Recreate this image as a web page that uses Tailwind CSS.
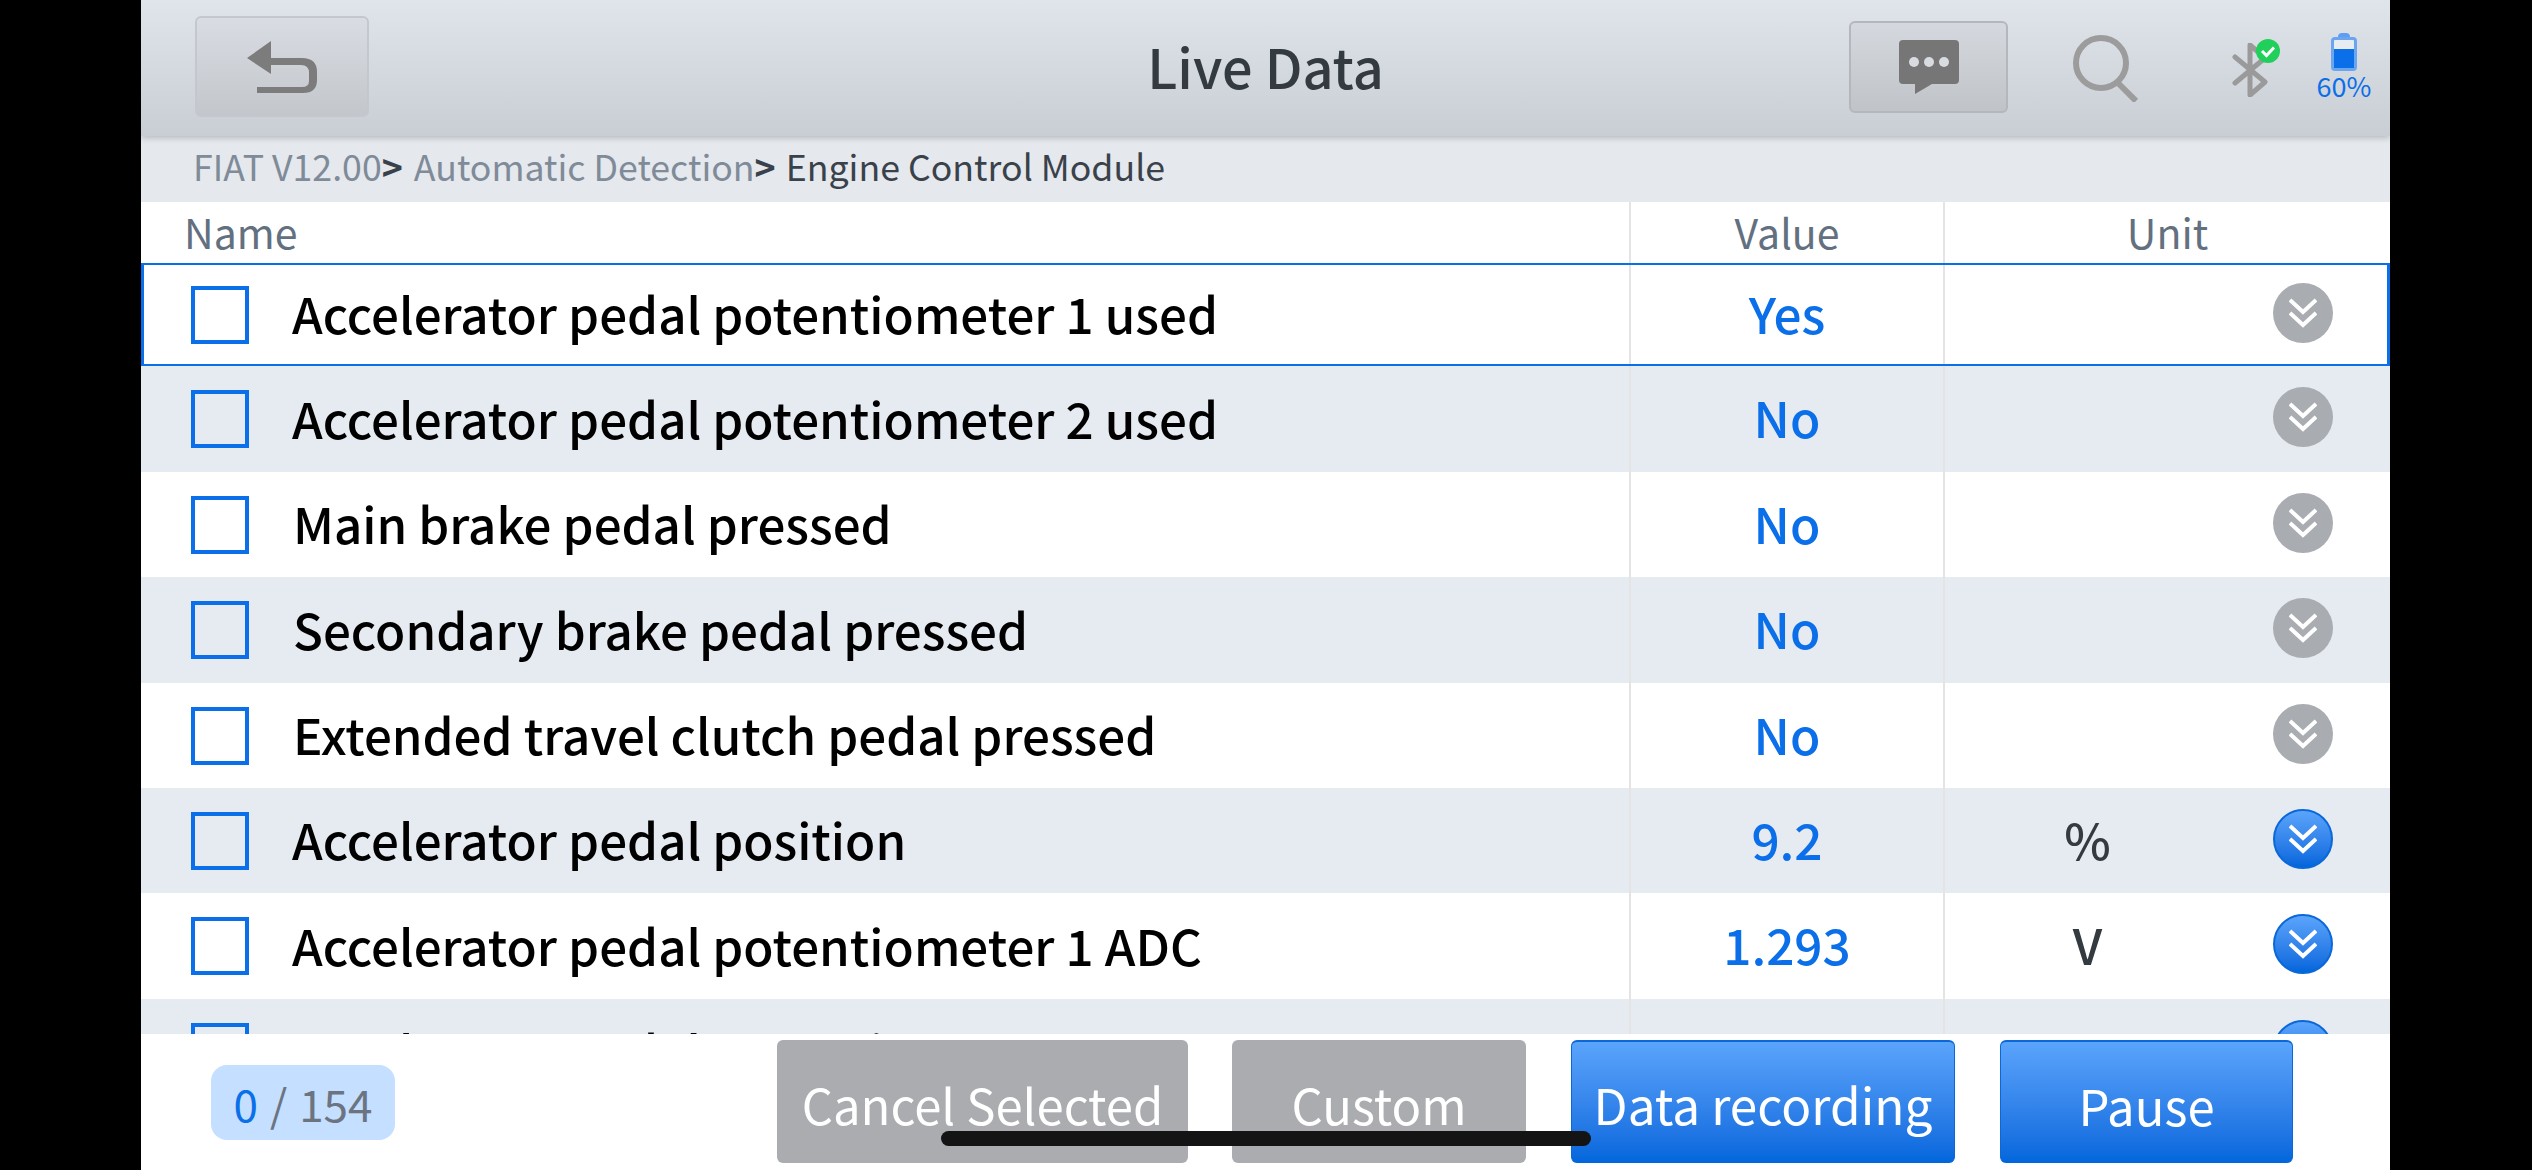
<!doctype html>
<html lang="en">
    <head>
        <meta charset="UTF-8" />
        <title>Live Data</title>
        <script src="https://cdn.jsdelivr.net/npm/@tailwindcss/browser@4"></script>
    </head>
    <body class="bg-black">
        <div class="relative ml-[141px] flex h-[1170px] w-[2249px] flex-col overflow-hidden bg-white font-['Noto_Sans_CJK_SC',sans-serif]">
            <!-- top bar -->
            <div class="relative z-10 flex h-[136px] shrink-0 items-start bg-gradient-to-b from-[#e0e5ec] to-[#c9cdd4] pr-[19px] shadow-[0_2px_6px_rgba(0,0,0,0.2)]">
                <button class="mt-4 ml-[54px] flex h-[101px] w-[174px] items-center justify-center rounded-md border-2 border-[#c4c8ce] bg-gradient-to-b from-[#d9dde3] to-[#c3c7cc]">
                    <svg width="74" height="56" viewBox="0 0 74 56">
                        <path d="M26 2 L2 19 L26 35 V26 H56 Q64 26 64 34 V42 Q64 48 57 48 H12 V54 H58 Q72 54 72 41 V33 Q72 19 57 19 H26 Z" fill="#7c7c7c" />
                    </svg>
                </button>
                <div class="flex-1 pt-[34px] pl-[313px] text-center text-[54px] leading-[64px] font-medium text-[#333a40]">Live Data</div>
                <button class="mt-[21px] flex h-[92px] w-[159px] items-center justify-center rounded-md border-2 border-[#b4b7bc] bg-gradient-to-b from-[#d5d9df] to-[#c0c4c8]">
                    <svg width="62" height="54" viewBox="0 0 62 54">
                        <path d="M5 0 H57 Q61 0 61 4 V40 Q61 44 57 44 H34 L17 54 V44 H5 Q1 44 1 40 V4 Q1 0 5 0 Z" fill="#767676" />
                        <circle cx="16" cy="22" r="5" fill="#d8dce1" />
                        <circle cx="31" cy="22" r="5" fill="#d8dce1" />
                        <circle cx="46" cy="22" r="5" fill="#d8dce1" />
                    </svg>
                </button>
                <svg class="mt-[34px] ml-[64px]" width="66" height="68" viewBox="0 0 66 68">
                    <circle cx="29" cy="29" r="25" fill="none" stroke="#9c9c9c" stroke-width="6" />
                    <path d="M46 49 L64 67" stroke="#9c9c9c" stroke-width="6" />
                </svg>
                <div class="relative mt-[43px] ml-[94px] h-[54px] w-[48px]">
                    <svg width="36" height="54" viewBox="0 0 36 54">
                        <path d="M3 14 L33 39 L18 52 V2 L33 15 L3 40" fill="none" stroke="#9a9a9a" stroke-width="5" stroke-linejoin="round" stroke-linecap="round" />
                    </svg>
                    <svg class="absolute top-[-4px] left-[24px]" width="24" height="24" viewBox="0 0 24 24">
                        <circle cx="12" cy="12" r="12" fill="#21d05a" />
                        <path d="M6 12 L10.5 16.5 L18 8.5" fill="none" stroke="#fff" stroke-width="3" />
                    </svg>
                </div>
                <div class="ml-[37px] flex w-[54px] flex-col items-center pt-[33px]">
                    <div class="h-[4px] w-[12px] rounded-t-sm bg-[#5f9df0]"></div>
                    <div class="flex h-[34px] w-[26px] flex-col justify-end rounded-[4px] border-[3px] border-[#6aa5f0] bg-[#e8ebf0]">
                        <div class="h-[19px] bg-[#0a6fe8]"></div>
                    </div>
                    <div class="text-[27px] leading-[30px] text-[#0a6fe8]">60%</div>
                </div>
            </div>

            <!-- breadcrumb -->
            <div class="flex h-[66px] shrink-0 items-center bg-[#e5e8ec] pb-[6px] pl-[52px] text-[35.7px] leading-[44px] text-[#7f8b99]">
                <span>FIAT V12.00</span><span class="font-bold text-[#39424b]">&gt;</span><span class="ml-[11px]">Automatic Detection</span><span class="font-bold text-[#39424b]">&gt;</span><span class="ml-[10px] text-[#39424b]">Engine Control Module</span>
            </div>

            <!-- table head -->
            <div class="grid h-[61px] shrink-0 grid-cols-[1488px_314px_447px] items-stretch text-[41px] leading-[58px] text-[#627080]">
                <div class="pl-[43px]">Name</div>
                <div class="border-l-2 border-[#e4e4e4] text-center">Value</div>
                <div class="border-l-2 border-[#e4e4e4] text-center">Unit</div>
            </div>

            <!-- rows -->
            <div class="min-h-0 flex-1 overflow-hidden">
                <div class="grid h-[103px] grid-cols-[1485px_314px_287px_157px] items-stretch border-x-[3px] border-y-2 border-[#0a6fe8]">
                    <div class="flex items-center pl-[47px]"><span class="h-[58px] w-[58px] shrink-0 border-[4px] border-[#0a6fe8]"></span><span class="mb-[3px] ml-[43px] text-[49.3px] font-medium text-black">Accelerator pedal potentiometer 1 used</span></div>
                    <div class="flex items-center justify-center border-l-2 border-[#e4e4e4] pb-[3px] text-[49.5px] font-medium text-[#0a6fe8]">Yes</div>
                    <div class="border-l-2 border-[#e4e4e4]"></div>
                    <div class="flex items-center justify-center pr-[11px] pb-1"><span class="flex h-[60px] w-[60px] items-center justify-center rounded-full bg-[#a9acb0]"><svg width="28" height="30" viewBox="0 0 28 30"><path d="M1 2 L14 14 L27 2 M1 15 L14 27 L27 15" fill="none" stroke="#fff" stroke-width="4" /></svg></span></div>
                </div>
                <div class="grid h-[106px] grid-cols-[1488px_314px_287px_160px] items-stretch bg-[#e6eaf1]">
                    <div class="flex items-center pl-[50px]"><span class="h-[58px] w-[58px] shrink-0 border-[4px] border-[#0a6fe8]"></span><span class="mb-[3px] ml-[43px] text-[49.3px] font-medium text-black">Accelerator pedal potentiometer 2 used</span></div>
                    <div class="flex items-center justify-center border-l-2 border-[#e4e4e4] pb-[3px] text-[49.5px] font-medium text-[#0a6fe8]">No</div>
                    <div class="border-l-2 border-[#e4e4e4]"></div>
                    <div class="flex items-center justify-center pr-[14px] pb-1"><span class="flex h-[60px] w-[60px] items-center justify-center rounded-full bg-[#a9acb0]"><svg width="28" height="30" viewBox="0 0 28 30"><path d="M1 2 L14 14 L27 2 M1 15 L14 27 L27 15" fill="none" stroke="#fff" stroke-width="4" /></svg></span></div>
                </div>
                <div class="grid h-[105px] grid-cols-[1488px_314px_287px_160px] items-stretch">
                    <div class="flex items-center pl-[50px]"><span class="h-[58px] w-[58px] shrink-0 border-[4px] border-[#0a6fe8]"></span><span class="mb-[3px] ml-[44px] text-[49.3px] font-medium text-black">Main brake pedal pressed</span></div>
                    <div class="flex items-center justify-center border-l-2 border-[#e4e4e4] pb-[3px] text-[49.5px] font-medium text-[#0a6fe8]">No</div>
                    <div class="border-l-2 border-[#e4e4e4]"></div>
                    <div class="flex items-center justify-center pr-[14px] pb-1"><span class="flex h-[60px] w-[60px] items-center justify-center rounded-full bg-[#a9acb0]"><svg width="28" height="30" viewBox="0 0 28 30"><path d="M1 2 L14 14 L27 2 M1 15 L14 27 L27 15" fill="none" stroke="#fff" stroke-width="4" /></svg></span></div>
                </div>
                <div class="grid h-[106px] grid-cols-[1488px_314px_287px_160px] items-stretch bg-[#e6eaf1]">
                    <div class="flex items-center pl-[50px]"><span class="h-[58px] w-[58px] shrink-0 border-[4px] border-[#0a6fe8]"></span><span class="mb-[3px] ml-[44px] text-[49.3px] font-medium text-black">Secondary brake pedal pressed</span></div>
                    <div class="flex items-center justify-center border-l-2 border-[#e4e4e4] pb-[3px] text-[49.5px] font-medium text-[#0a6fe8]">No</div>
                    <div class="border-l-2 border-[#e4e4e4]"></div>
                    <div class="flex items-center justify-center pr-[14px] pb-1"><span class="flex h-[60px] w-[60px] items-center justify-center rounded-full bg-[#a9acb0]"><svg width="28" height="30" viewBox="0 0 28 30"><path d="M1 2 L14 14 L27 2 M1 15 L14 27 L27 15" fill="none" stroke="#fff" stroke-width="4" /></svg></span></div>
                </div>
                <div class="grid h-[105px] grid-cols-[1488px_314px_287px_160px] items-stretch">
                    <div class="flex items-center pl-[50px]"><span class="h-[58px] w-[58px] shrink-0 border-[4px] border-[#0a6fe8]"></span><span class="mb-[3px] ml-[44px] text-[49.3px] font-medium text-black">Extended travel clutch pedal pressed</span></div>
                    <div class="flex items-center justify-center border-l-2 border-[#e4e4e4] pb-[3px] text-[49.5px] font-medium text-[#0a6fe8]">No</div>
                    <div class="border-l-2 border-[#e4e4e4]"></div>
                    <div class="flex items-center justify-center pr-[14px] pb-1"><span class="flex h-[60px] w-[60px] items-center justify-center rounded-full bg-[#a9acb0]"><svg width="28" height="30" viewBox="0 0 28 30"><path d="M1 2 L14 14 L27 2 M1 15 L14 27 L27 15" fill="none" stroke="#fff" stroke-width="4" /></svg></span></div>
                </div>
                <div class="grid h-[105px] grid-cols-[1488px_314px_287px_160px] items-stretch bg-[#e6eaf1]">
                    <div class="flex items-center pl-[50px]"><span class="h-[58px] w-[58px] shrink-0 border-[4px] border-[#0a6fe8]"></span><span class="mb-[3px] ml-[43px] text-[49.3px] font-medium text-black">Accelerator pedal position</span></div>
                    <div class="flex items-center justify-center border-l-2 border-[#e4e4e4] pb-[3px] text-[49.5px] font-medium text-[#0a6fe8]">9.2</div>
                    <div class="flex items-center justify-center border-l-2 border-[#e4e4e4] pb-[3px] text-[49.5px] font-medium text-[#333a40]">%</div>
                    <div class="flex items-center justify-center pr-[14px] pb-1"><span class="flex h-[60px] w-[60px] items-center justify-center rounded-full border-2 border-[#0a68d8] bg-gradient-to-b from-[#5aa4fb] to-[#0066dc]"><svg width="28" height="30" viewBox="0 0 28 30"><path d="M1 2 L14 14 L27 2 M1 15 L14 27 L27 15" fill="none" stroke="#fff" stroke-width="4" /></svg></span></div>
                </div>
                <div class="grid h-[106px] grid-cols-[1488px_314px_287px_160px] items-stretch">
                    <div class="flex items-center pl-[50px]"><span class="h-[58px] w-[58px] shrink-0 border-[4px] border-[#0a6fe8]"></span><span class="mb-[3px] ml-[43px] text-[49.3px] font-medium text-black">Accelerator pedal potentiometer 1 ADC</span></div>
                    <div class="flex items-center justify-center border-l-2 border-[#e4e4e4] pb-[3px] text-[49.5px] font-medium text-[#0a6fe8]">1.293</div>
                    <div class="flex items-center justify-center border-l-2 border-[#e4e4e4] pb-[3px] text-[49.5px] font-medium text-[#333a40]">V</div>
                    <div class="flex items-center justify-center pr-[14px] pb-1"><span class="flex h-[60px] w-[60px] items-center justify-center rounded-full border-2 border-[#0a68d8] bg-gradient-to-b from-[#5aa4fb] to-[#0066dc]"><svg width="28" height="30" viewBox="0 0 28 30"><path d="M1 2 L14 14 L27 2 M1 15 L14 27 L27 15" fill="none" stroke="#fff" stroke-width="4" /></svg></span></div>
                </div>
                <div class="grid h-[106px] grid-cols-[1488px_314px_287px_160px] items-stretch bg-[#e6eaf1]">
                    <div class="flex items-center pl-[50px]"><span class="h-[58px] w-[58px] shrink-0 border-[4px] border-[#0a6fe8]"></span><span class="mb-[3px] ml-[43px] text-[49.3px] font-medium text-black">Accelerator pedal potentiometer 2 ADC</span></div>
                    <div class="border-l-2 border-[#e4e4e4]"></div>
                    <div class="border-l-2 border-[#e4e4e4]"></div>
                    <div class="flex items-center justify-center pr-[14px] pb-1"><span class="flex h-[60px] w-[60px] items-center justify-center rounded-full border-2 border-[#0a68d8] bg-gradient-to-b from-[#5aa4fb] to-[#0066dc]"></span></div>
                </div>
            </div>

            <!-- footer -->
            <div class="flex h-[136px] shrink-0 items-start bg-white">
                <div class="mt-[31px] ml-[70px] flex h-[75px] w-[184px] items-center justify-center rounded-2xl bg-[#c4dfff] text-[44px] text-[#6b7480]"><span class="text-[#0a6fe8]">0</span><span class="ml-3">/</span><span class="ml-3">154</span></div>
                <button class="mt-[6px] ml-[382px] h-[123px] w-[411px] rounded-md bg-[#aaacb0] pt-[4px] text-[49px] text-white">Cancel Selected</button>
                <button class="mt-[6px] ml-[44px] h-[123px] w-[294px] rounded-md bg-[#aaacb0] pt-[4px] text-[49px] text-white">Custom</button>
                <button class="mt-[6px] ml-[45px] h-[123px] w-[384px] rounded-md border-x border-t-2 border-[#0a68d8] bg-gradient-to-b from-[#5aa4fb] to-[#0066dc] pt-[4px] text-[49.5px] text-white">Data recording</button>
                <button class="mt-[6px] ml-[45px] h-[123px] w-[293px] rounded-md border-x border-t-2 border-[#0a68d8] bg-gradient-to-b from-[#5aa4fb] to-[#0066dc] pt-[4px] text-[49px] text-white">Pause</button>
            </div>

            <!-- home indicator -->
            <div class="absolute top-[1131px] left-[800px] h-[15px] w-[650px] rounded-full bg-[#141414]"></div>
        </div>
    </body>
</html>
